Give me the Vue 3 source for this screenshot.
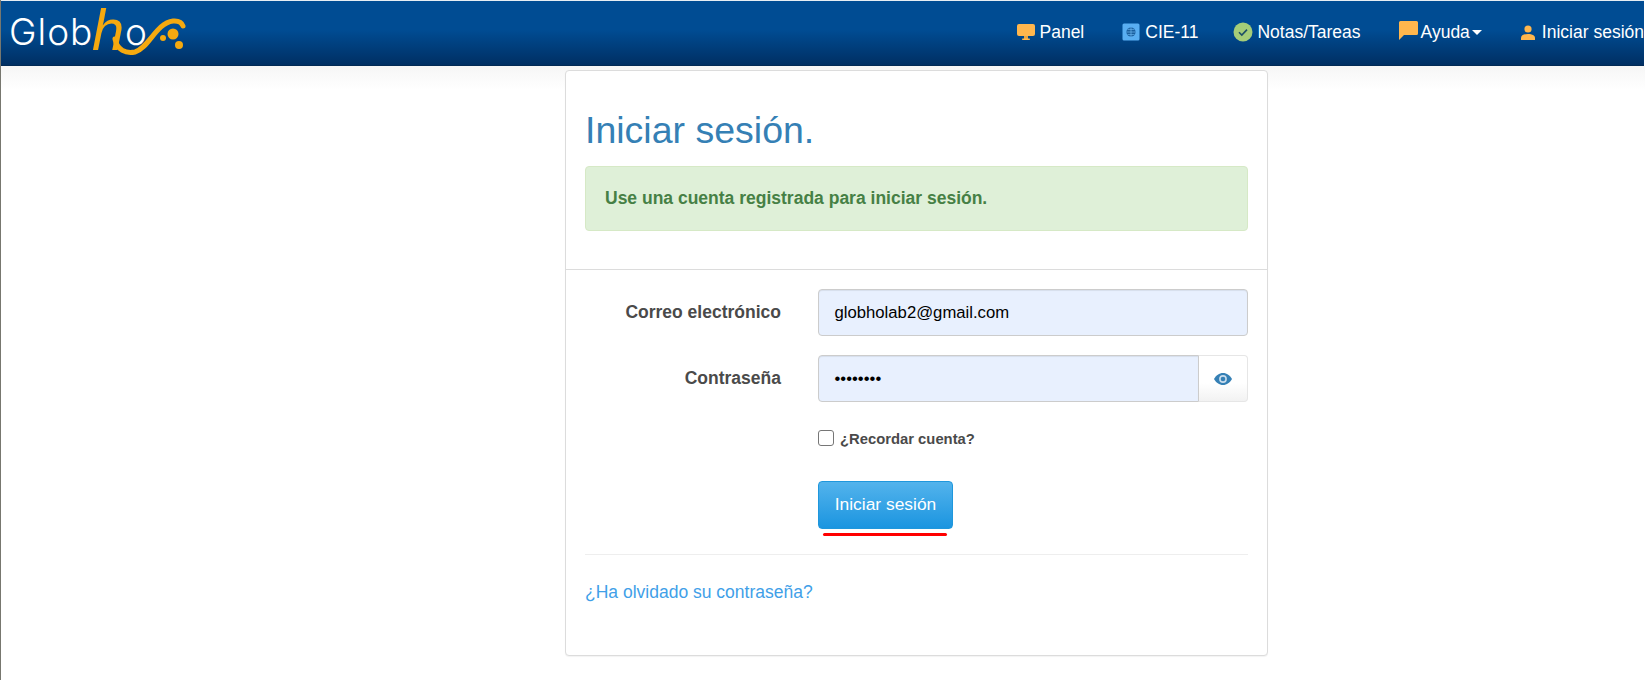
<script setup>
const items = [
  { key: 'panel', label: 'Panel' },
  { key: 'cie', label: 'CIE-11' },
  { key: 'notes', label: 'Notas/Tareas' },
  { key: 'help', label: 'Ayuda', caret: true },
  { key: 'user', label: 'Iniciar sesión' }
]
</script>

<template>
  <div class="page">
    <header class="navbar">
      <div class="logo">
        <span class="logo-text">Glob</span>
        <span class="logo-h">h</span>
        <span class="logo-text logo-o">o</span>
        <svg class="logo-swoosh" viewBox="0 0 190 60" width="190" height="60" aria-hidden="true">
          <path d="M114 38 C116 49 125 53 134 51 C148 47 155 22 172 20 C178 19.500 181 22 182 25" fill="none" stroke="#f5a90f" stroke-width="5" stroke-linecap="round"/>
          <circle cx="162" cy="37" r="3" fill="#f5a90f"/>
          <circle cx="172" cy="33" r="5.500" fill="#f5a90f"/>
          <circle cx="178" cy="44" r="4" fill="#f5a90f"/>
        </svg>
      </div>
      <nav class="menu">
        <a v-for="item in items" :key="item.key" class="menu-item" :class="`item-${item.key}`">
          <svg v-if="item.key === 'panel'" class="icon" viewBox="0 0 18 18" width="18" height="18">
            <rect x="0" y="1" width="18" height="12" rx="2" fill="#ffb64d"/>
            <rect x="7" y="13" width="4" height="3" fill="#e8a33f"/>
            <rect x="5" y="15.500" width="8" height="1.500" rx=".7" fill="#ffb64d"/>
          </svg>
          <svg v-else-if="item.key === 'cie'" class="icon" viewBox="0 0 18 18" width="18" height="18">
            <rect x="0.500" y="0.500" width="17" height="17" rx="1.500" fill="#59aef2"/>
            <circle cx="9" cy="9" r="4.600" fill="#1a5f9f"/>
            <path d="M4.600 9h8.800M9 4.400v9.200M5.600 6.400h6.800M5.600 11.600h6.800" stroke="#6db8f0" stroke-width=".7"/>
          </svg>
          <svg v-else-if="item.key === 'notes'" class="icon" viewBox="0 0 20 20" width="20" height="20">
            <circle cx="10" cy="10" r="9.500" fill="#a5cd78"/>
            <path d="M6 10.200l2.800 2.800 5.200-5.400" fill="none" stroke="#1d4f66" stroke-width="1.600"/>
          </svg>
          <svg v-else-if="item.key === 'help'" class="icon icon-up" viewBox="0 0 19 19" width="19" height="19">
            <path d="M1.500 0h16A1.500 1.500 0 0 1 19 1.500v11a1.500 1.500 0 0 1-1.500 1.500H5L0 19V1.500A1.500 1.500 0 0 1 1.500 0z" fill="#ffb64d"/>
          </svg>
          <svg v-else class="icon icon-user" viewBox="0 0 14 15" width="14" height="15">
            <circle cx="7" cy="4" r="3.600" fill="#ffb64d"/>
            <path d="M0 15v-2c0-2.400 2.600-4 7-4s7 1.600 7 4v2z" fill="#ffb64d"/>
          </svg>
          <span>{{ item.label }}</span>
          <i v-if="item.caret" class="caret"></i>
        </a>
      </nav>
    </header>

    <main class="card">
      <section class="card-head">
        <h2 class="title">Iniciar sesión.</h2>
        <div class="alert">Use una cuenta registrada para iniciar sesión.</div>
      </section>
      <form class="form" @submit.prevent>
        <div class="row">
          <label class="label">Correo electrónico</label>
          <div class="input filled">globholab2@gmail.com</div>
        </div>
        <div class="row">
          <label class="label">Contraseña</label>
          <div class="group">
            <div class="input filled joined">••••••••</div>
            <span class="addon">
              <svg viewBox="0 0 18 12" width="18" height="12">
                <path d="M0 6C2 2.400 5.200 0 9 0s7 2.400 9 6c-2 3.600-5.200 6-9 6S2 9.600 0 6z" fill="#3580b5"/>
                <circle cx="9" cy="6" r="3.900" fill="#c9dcec"/>
                <circle cx="9" cy="6" r="2.300" fill="#3580b5"/>
              </svg>
            </span>
          </div>
        </div>
        <div class="row check-row">
          <span class="check"></span>
          <span class="check-label">¿Recordar cuenta?</span>
        </div>
        <div class="row submit-row">
          <button class="btn" type="button">Iniciar sesión</button>
          <span class="underline"></span>
        </div>
      </form>
      <section class="foot">
        <a class="link">¿Ha olvidado su contraseña?</a>
      </section>
    </main>
  </div>
</template>

<style>
html, body { margin: 0; background: #fff; }
</style>

<style scoped>
.page {
  width: 1645px;
  height: 680px;
  overflow: hidden;
  box-sizing: border-box;
  border-left: 1px solid #77776f;
  font-family: "Liberation Sans", Arial, sans-serif;
  background: linear-gradient(#f6f6f6, #fff 24px) no-repeat 0 66px;
}
.navbar {
  height: 66px;
  box-sizing: border-box;
  margin-right: 1px;
  border-top: 1px solid #e6edf3;
  display: flex;
  align-items: flex-start;
  background: linear-gradient(#004c93 0, #004c93 45%, #002f63 100%);
  border-bottom: 1px solid #022a55;
  overflow: hidden;
}
.logo {
  position: relative;
  width: 190px;
  height: 60px;
  flex: none;
}
.logo-text {
  position: absolute;
  left: 8px;
  top: 11px;
  font-family: "Inter", sans-serif;
  font-weight: 300;
  font-size: 37px;
  letter-spacing: 1px;
  line-height: 40px;
  color: #fff;
}
.logo-h {
  position: absolute;
  left: 91px;
  top: 0;
  font-family: "Liberation Sans", sans-serif;
  font-style: italic;
  font-size: 58px;
  line-height: 58px;
  color: #f5a90f;
}
.logo-o { left: 124px; }
.logo-swoosh {
  position: absolute;
  left: 0;
  top: 0;
}
.menu {
  margin-left: auto;
  margin-right: 0;
  display: flex;
  gap: 38px;
  height: 62px;
  align-items: center;
  white-space: nowrap;
}
.menu-item {
  display: flex;
  align-items: center;
  gap: 5px;
  color: #fff;
  font-size: 17.500px;
}
.item-notes { margin-left: -3px; gap: 4px; }
.item-help { gap: 3px; }
.item-user { margin-left: 1px; }
.icon { flex: none; }
.icon-up { margin-top: -4px; }
.icon-user { margin-right: 2px; }
.caret {
  width: 0;
  height: 0;
  margin-left: -1px;
  border-left: 5px solid transparent;
  border-right: 5px solid transparent;
  border-top: 5px solid #fff;
}
.card {
  width: 703px;
  height: 586px;
  box-sizing: border-box;
  margin: 4px 0 0 564px;
  border: 1px solid #dcdcdc;
  border-radius: 4px;
  box-shadow: 0 1px 1px rgba(0, 0, 0, .05);
  background: #fff;
  color: #333;
}
.card-head {
  padding: 38px 19px 0;
  height: 199px;
  box-sizing: border-box;
  border-bottom: 1px solid #dcdcdc;
}
.title {
  margin: 0 0 15px;
  font-size: 37.500px;
  font-weight: 400;
  line-height: 42px;
  color: #3580b5;
}
.alert {
  height: 65px;
  box-sizing: border-box;
  padding: 0 19px;
  display: flex;
  align-items: center;
  background: #dff0d8;
  border: 1px solid #d6e9c6;
  border-radius: 4px;
  color: #468045;
  font-size: 17.500px;
  font-weight: 700;
}
.form {
  margin: 0 19px;
  padding-top: 19px;
  height: 285px;
  box-sizing: border-box;
  border-bottom: 1px solid #eee;
}
.row {
  display: flex;
  margin-bottom: 19px;
}
.label {
  width: 196px;
  flex: none;
  height: 47px;
  line-height: 46px;
  text-align: right;
  font-size: 17.500px;
  font-weight: 700;
  color: #4a4a4a;
  margin-right: 37px;
}
.input {
  width: 430px;
  height: 47px;
  box-sizing: border-box;
  padding: 0 15.500px;
  line-height: 45px;
  font-size: 16.700px;
  color: #000;
  border: 1px solid #ccc;
  border-radius: 4px;
  box-shadow: inset 0 1px 1px rgba(0, 0, 0, .075);
}
.filled { background: #e8f0fe; }
.group { display: flex; width: 430px; }
.joined {
  width: 381px;
  border-radius: 4px 0 0 4px;
}
.addon {
  width: 49px;
  height: 47px;
  box-sizing: border-box;
  display: flex;
  align-items: center;
  justify-content: center;
  border: 1px solid #e6e6e6;
  border-left: 0;
  border-radius: 0 4px 4px 0;
  background: linear-gradient(#fff 60%, #f2f2f2);
}
.check-row {
  margin: 28px 0 0 233px;
  align-items: center;
  height: 16px;
}
.check {
  width: 16px;
  height: 16px;
  box-sizing: border-box;
  border: 1px solid #767676;
  border-radius: 3px;
  background: #fff;
  margin-right: 6px;
}
.check-label {
  padding-top: 2px;
  font-size: 14.800px;
  font-weight: 700;
  color: #4a4a4a;
}
.submit-row {
  position: relative;
  margin: 35px 0 0 233px;
}
.btn {
  width: 135px;
  height: 48px;
  padding: 0 0 2px;
  border: 1px solid #1f97dc;
  border-radius: 4px;
  background: linear-gradient(#53b3ec, #1b95e0);
  color: #fff;
  font-family: inherit;
  font-size: 17.400px;
}
.underline {
  position: absolute;
  left: 5px;
  bottom: -7px;
  width: 124px;
  height: 3px;
  border-radius: 2px;
  background: #f00;
}
.foot { padding: 26px 19px 0; }
.link {
  font-size: 17.500px;
  line-height: 22px;
  color: #3fa0e8;
}
</style>
